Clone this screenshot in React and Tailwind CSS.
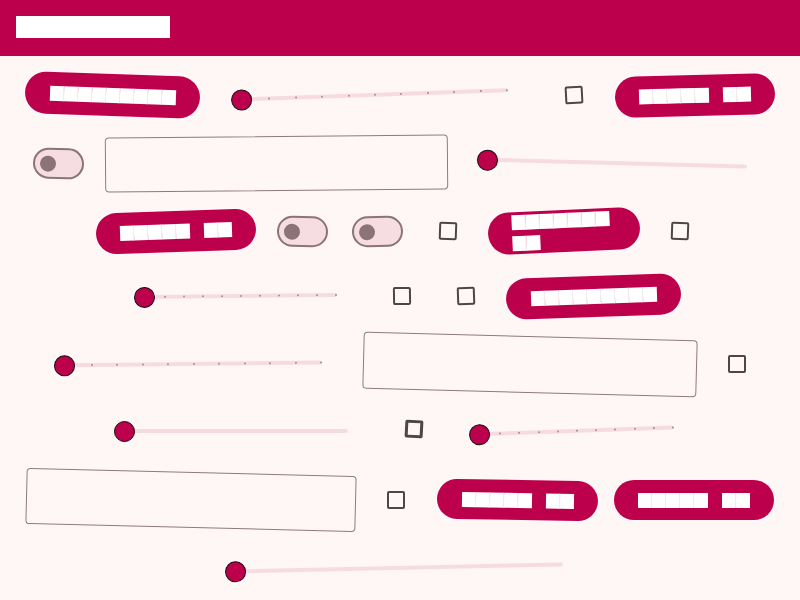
import React from "react";

// white "tofu" boxes stand in for the glyphs that the reference shows
function Word({ n }) {
  return (
    <span className="flex">
      {Array.from({ length: n }).map((_, i) => (
        <span key={i} className="block w-[14px] h-[15px] bg-white border-r border-[#f4e9eb] last:border-r-0" />
      ))}
    </span>
  );
}

function Label({ words }) {
  return (
    <span className="flex gap-[14px]">
      {words.map((n, i) => (
        <Word key={i} n={n} />
      ))}
    </span>
  );
}

function Button({ words, className }) {
  return (
    <button className={"flex shrink-0 items-center justify-center rounded-full bg-[#bc004b] " + className}>
      <Label words={words} />
    </button>
  );
}

function Checkbox({ className = "" }) {
  return <span className={"block shrink-0 w-[18px] h-[18px] rounded-[2px] border-2 border-[#524346] " + className} />;
}

function Switch({ className = "" }) {
  return (
    <span className={"flex shrink-0 items-center w-[51px] h-[31px] rounded-full border-2 border-[#8b7377] bg-[#f6dde1] " + className}>
      <span className="block ml-[5px] w-[16px] h-[16px] rounded-full bg-[#8b7377]" />
    </span>
  );
}

function Slider({ ticks, className = "" }) {
  return (
    <div className={"relative shrink-0 h-[22px] " + className}>
      <div className="absolute left-[11px] right-0 top-[9px] h-[4px] rounded-full bg-[#f6dce1]">
        {ticks && (
          <div className="flex h-full items-center justify-between">
            {Array.from({ length: 11 }).map((_, i) => (
              <span key={i} className="block w-[2px] h-[2px] rounded-full bg-[#a48f93]" />
            ))}
          </div>
        )}
      </div>
      <span className="absolute left-0 top-[0.5px] w-[21px] h-[21px] rounded-full bg-[#bc004b] border-[1.5px] border-[#1a0a0f]" />
    </div>
  );
}

function Field({ className = "" }) {
  return <div className={"shrink-0 rounded-[4px] border border-[#8f7a7e] " + className} />;
}

export default function App() {
  return (
    <div className="w-[800px] h-[600px] overflow-hidden bg-[#fff7f6] font-['Roboto',sans-serif]">
      <header className="h-[56px] bg-[#bc004b] pt-4 pl-4">
        <div className="w-[154px] h-[22px] bg-white" />
      </header>

      <main className="pt-[5px]">
        {/* row 1 */}
        <div className="flex h-[68px] items-center">
          <Button words={[9]} className="ml-[25px] w-[175px] h-[42px] rotate-[2deg]" />
          <Slider ticks className="ml-[31px] w-[277px] rotate-[-2deg]" />
          <Checkbox className="ml-[57px] rotate-[-3deg]" />
          <Button words={[5, 2]} className="ml-[32px] w-[160px] h-[41px] rotate-[-1.5deg]" />
        </div>

        {/* row 2 */}
        <div className="flex h-[68px] items-center">
          <Switch className="ml-[33px] rotate-[2deg]" />
          <Field className="ml-[21px] w-[343px] h-[55px] rotate-[-0.5deg]" />
          <Slider className="ml-[29px] w-[270px] rotate-[1.5deg]" />
        </div>

        {/* row 3 */}
        <div className="flex h-[68px] items-center">
          <Button words={[5, 2]} className="ml-[96px] w-[160px] h-[41px] rotate-[-2deg]" />
          <Switch className="ml-[21px] rotate-[1deg]" />
          <Switch className="ml-[24px] rotate-[-1deg]" />
          <Checkbox className="ml-[36px] rotate-[2deg]" />
          <button className="ml-[31px] flex shrink-0 flex-col items-start justify-center gap-[6px] rounded-full bg-[#bc004b] pl-[24px] w-[152px] h-[42px] rotate-[-2.5deg]">
            <Word n={7} />
            <Word n={2} />
          </button>
          <Checkbox className="ml-[31px] rotate-[2deg]" />
        </div>

        {/* row 4 */}
        <div className="flex h-[62px] items-center">
          <Slider ticks className="ml-[134px] w-[203px] rotate-[-0.6deg]" />
          <Checkbox className="ml-[56px] rotate-[-1deg]" />
          <Checkbox className="ml-[46px] rotate-[-2deg]" />
          <Button words={[9]} className="ml-[31px] w-[175px] h-[41px] rotate-[-2deg]" />
        </div>

        {/* row 5 */}
        <div className="flex h-[74px] items-center">
          <Slider ticks className="ml-[54px] w-[268px] rotate-[-0.6deg]" />
          <Field className="ml-[41px] w-[334px] h-[57px] rotate-[1.5deg]" />
          <Checkbox className="ml-[31px]" />
        </div>

        {/* row 6 */}
        <div className="flex h-[60px] items-center">
          <Slider className="ml-[114px] w-[234px]" />
          <Checkbox className="ml-[57px] -translate-y-[2px] border-[3px] rotate-[3deg]" />
          <Slider ticks className="ml-[46px] w-[205px] rotate-[-2deg]" />
        </div>

        {/* row 7 */}
        <div className="flex h-[78px] items-center">
          <Field className="ml-[26px] w-[330px] h-[56px] rotate-[1.4deg]" />
          <Checkbox className="ml-[31px]" />
          <Button words={[5, 2]} className="ml-[32px] w-[161px] h-[40px] rotate-[1deg]" />
          <Button words={[5, 2]} className="ml-[16px] w-[160px] h-[40px]" />
        </div>

        {/* row 8 */}
        <div className="flex h-[58px] items-center">
          <Slider className="ml-[225px] w-[338px] rotate-[-1.2deg]" />
        </div>
      </main>
    </div>
  );
}
